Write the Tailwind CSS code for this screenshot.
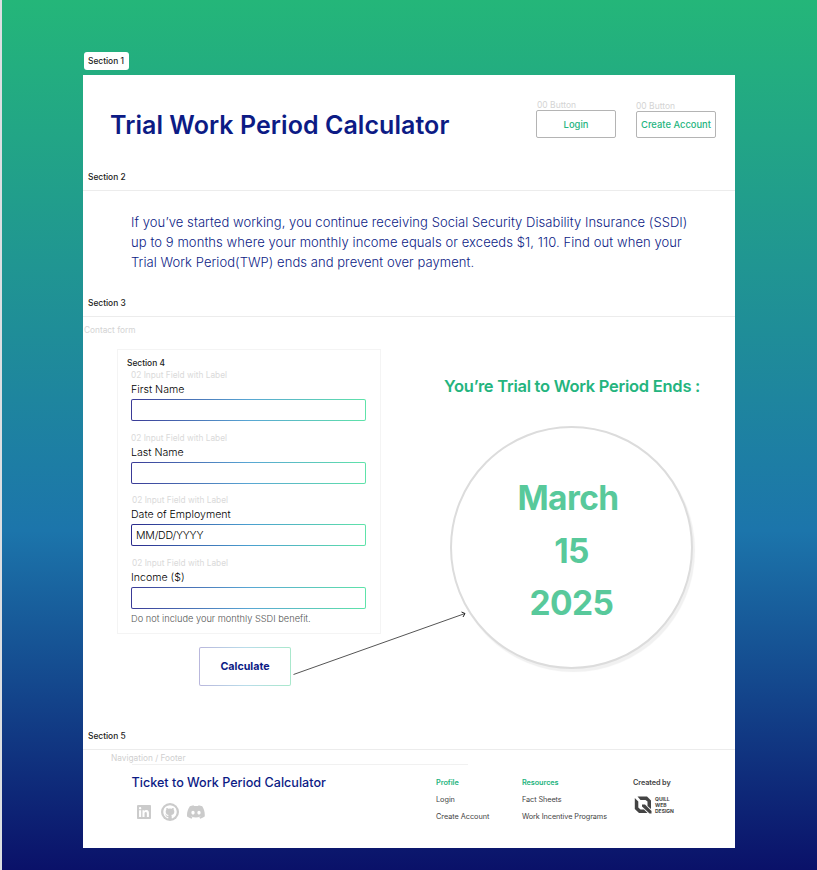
<!DOCTYPE html>
<html lang="en">
<head>
<meta charset="utf-8">
<title>Trial Work Period Calculator</title>
<script src="https://cdn.jsdelivr.net/npm/@tailwindcss/browser@4"></script>
</head>
<body class="w-[817px] h-[870px] overflow-hidden font-['Inter',sans-serif] bg-[linear-gradient(180deg,#24b679_0%,#1c75ab_61%,#0a1169_100%)]">
<div class="relative w-[817px] h-[870px] border-l-2 border-[#dcdfe2] pl-[81px] pt-[52px]">
  <div class="ml-px w-[45px] h-[18px] rounded-[3px] bg-white pl-[4px] text-[8.4px] leading-[18px] font-medium text-[#222] whitespace-nowrap">Section 1</div>
  <main class="mt-[5px] w-[652px] h-[773px] bg-white whitespace-nowrap">
    <header class="h-[116px] border-b border-[#ececec] flex flex-col justify-between">
      <div class="flex pl-[27px]">
        <h1 class="pt-[33px] w-[427px] text-[25px] leading-[34px] font-semibold text-[#0c1b85] tracking-[0.06px]">Trial Work Period Calculator</h1>
        <div class="pt-[24px] w-[99px]">
          <div class="text-[8.5px] leading-[12px] -mb-px text-[#d4d4d4]">00 Button</div>
          <button class="-ml-px block w-[80px] h-[28px] pt-[2px] rounded-[2px] border border-[#b4b4b4] text-[9.4px] font-medium text-[#24b47e]">Login</button>
        </div>
        <div class="pt-[25px]">
          <div class="text-[8.5px] leading-[12px] -mb-px text-[#d4d4d4]">00 Button</div>
          <button class="block w-[80px] h-[27px] pt-[2px] rounded-[2px] border border-[#b4b4b4] text-[9.4px] font-medium text-[#24b47e]">Create Account</button>
        </div>
      </div>
      <div class="pl-[5px] pb-[7px] text-[8.4px] leading-[12px] font-medium text-[#222]">Section 2</div>
    </header>

    <section class="h-[126px] border-b border-[#ececec] flex flex-col justify-between">
      <p class="pl-[48px] pt-[22px] text-[13px] leading-[19.8px] font-light text-[#0c1b85] tracking-[0.055px]">If you’ve started working, you continue receiving Social Security Disability Insurance (SSDI)<br><span class="tracking-[0.085px]">up to 9 months where your monthly income equals or exceeds $1, 110. Find out when your</span><br>Trial Work Period(TWP) ends and prevent over payment.</p>
      <div class="pl-[5px] pb-[7px] text-[8.4px] leading-[12px] font-medium text-[#222]">Section 3</div>
    </section>

    <section class="relative h-[433px] border-b border-[#ececec] flex flex-col justify-between">
      <div class="flex">
        <div class="w-[297px]">
          <div class="pt-[7px] pl-[1px] text-[8.3px] leading-[12px] text-[#d4d4d4]">Contact form</div>
          <form class="mt-[13px] ml-[34px] w-[264px] h-[285px] border border-[#f4f4f4] pl-[13px] pt-[8px]">
            <div class="-ml-[4px] text-[8.4px] leading-[11px] font-medium text-[#222]">Section 4</div>
            <div class="h-[62.5px]">
              <div class="text-[8.3px] leading-[12px] text-[#dadada]">02 Input Field with Label</div>
              <label class="block text-[10.6px] leading-[18px] font-light text-black">First Name</label>
              <div class="w-[235px] h-[22px] p-px rounded-[2px] bg-[linear-gradient(90deg,#3a3a96,#58a6d4_50%,#5fe3a9)]"><div class="h-full rounded-[1px] bg-white"></div></div>
            </div>
            <div class="h-[62.5px]">
              <div class="text-[8.3px] leading-[12px] text-[#dadada]">02 Input Field with Label</div>
              <label class="block text-[10.6px] leading-[17px] mb-px font-light text-black">Last Name</label>
              <div class="w-[235px] h-[22px] p-px rounded-[2px] bg-[linear-gradient(90deg,#3a3a96,#58a6d4_50%,#5fe3a9)]"><div class="h-full rounded-[1px] bg-white"></div></div>
            </div>
            <div class="h-[62.5px]">
              <div class="pl-px text-[8.3px] leading-[12px] text-[#dadada]">02 Input Field with Label</div>
              <label class="block text-[10.6px] leading-[18px] font-light text-black">Date of Employment</label>
              <div class="w-[235px] h-[22px] p-px rounded-[2px] bg-[linear-gradient(90deg,#2a2a8c,#4a9fd0_50%,#5fe3a9)]"><div class="h-full rounded-[1px] bg-white pl-[4px] pt-px text-[10.6px] leading-[20px] font-light text-black tracking-[-0.22px]">MM/DD/YYYY</div></div>
            </div>
            <div>
              <div class="pl-px text-[8.3px] leading-[12px] text-[#dadada]">02 Input Field with Label</div>
              <label class="block text-[10.6px] leading-[17px] mb-px font-light text-black">Income ($)</label>
              <div class="w-[235px] h-[22px] p-px rounded-[2px] bg-[linear-gradient(90deg,#3a3a96,#58a6d4_50%,#5fe3a9)]"><div class="h-full rounded-[1px] bg-white"></div></div>
              <div class="pt-[3px] text-[9.25px] leading-[14px] font-light text-[#555]">Do not include your monthly SSDI benefit.</div>
            </div>
          </form>
          <div class="mt-[13px] ml-[116px] w-[92px] h-[39px] p-px rounded-[2px] bg-[linear-gradient(90deg,#b9b7dc,#b9dcea_50%,#a9e8cc)]"><button class="block w-full h-full pt-[2px] rounded-[1px] bg-white text-[10.7px] font-bold text-[#0c1b85]">Calculate</button></div>
        </div>
        <div class="ml-[64px] pt-[58px]">
          <h2 class="text-[16.5px] leading-[22px] font-semibold text-[#24b47e] tracking-[-0.26px]">You’re Trial to Work Period Ends :</h2>
          <div class="ml-[6px] mt-[29px] w-[243px] h-[243px] rounded-full border-2 border-[#dcdcdc] bg-white shadow-[2px_3px_1px_#f1f1f1] pt-[44px] text-center text-[33.5px] leading-[52.5px] font-bold text-[#58c99b] tracking-[-0.6px]">
            <div class="-ml-[7px]">March</div><div>15</div><div>2025</div>
          </div>
        </div>
      </div>
      <svg class="absolute left-[208px] top-[293px]" width="178" height="68" fill="none" stroke="#555" stroke-width="1"><path d="M2.500 64.500L174 3.500"/><path d="M170.500 2L174 3.500L172 7" stroke="#222"/></svg>
      <div class="pl-[5px] pb-[7px] text-[8.4px] leading-[12px] font-medium text-[#222]">Section 5</div>
    </section>

    <footer>
      <div class="pl-[28px] pt-[2px] text-[8.3px] leading-[12px] text-[#d0d0d0]">Navigation / Footer</div>
      <div class="ml-[49px] w-[336px] h-px bg-[#f1f1f1]"></div>
      <div class="flex pl-[49px] pt-[9px]">
        <div class="w-[304px]">
          <div class="-ml-[0.5px] text-[12.6px] leading-[18px] font-medium text-[#0c1b85]">Ticket to Work Period Calculator</div>
          <div class="mt-[11px] ml-[5px] flex items-center gap-[8px] text-[#cbcbcb]">
            <svg width="14" height="18" viewBox="0 0 24 24" fill="currentColor"><path d="M22.200 0H1.800A1.770 1.770 0 0 0 0 1.730v20.540C0 23.220.8 24 1.770 24h20.450c.98 0 1.780-.78 1.780-1.730V1.730C24 .77 23.200 0 22.200 0zM7.120 20.450H3.560V9h3.560zM5.340 7.430a2.060 2.060 0 1 1 0-4.120 2.060 2.060 0 0 1 0 4.120zM20.450 20.450h-3.560v-5.570c0-1.330-.02-3.040-1.850-3.040-1.850 0-2.140 1.450-2.140 2.940v5.670H9.350V9h3.410v1.560h.05c.48-.9 1.640-1.850 3.370-1.850 3.600 0 4.270 2.370 4.270 5.460z"/></svg>
            <svg class="ml-[1.5px]" width="18" height="18" viewBox="0 0 24 24"><circle cx="12" cy="12" r="12" fill="currentColor"/><path fill="#fff" d="M12 3a9 9 0 0 0-2.850 17.540c.45.080.6-.2.600-.43v-1.700c-2.500.54-3.030-1.060-3.030-1.060-.4-1.040-1-1.320-1-1.320-.82-.56.060-.55.060-.55.900.06 1.380.93 1.380.93.800 1.370 2.100.98 2.620.75.080-.58.310-.98.570-1.200-2-.23-4.100-1-4.100-4.450 0-.98.350-1.790.930-2.420-.1-.22-.4-1.140.080-2.380 0 0 .76-.24 2.480.93a8.600 8.600 0 0 1 4.520 0c1.720-1.170 2.470-.93 2.470-.93.500 1.240.190 2.160.1 2.380.57.630.92 1.440.92 2.420 0 3.460-2.110 4.220-4.120 4.440.33.280.62.830.62 1.670v2.490c0 .24.150.52.610.43A9 9 0 0 0 12 3z"/></svg>
            <svg width="18" height="18" viewBox="0 0 24 24" fill="currentColor"><path d="M20.320 4.370a19.800 19.800 0 0 0-4.890-1.520c-.2.380-.45.870-.61 1.260a18.300 18.300 0 0 0-5.490 0 12.600 12.600 0 0 0-.62-1.260 19.700 19.700 0 0 0-4.890 1.520C.530 9.050-.320 13.580.1 18.060a19.900 19.900 0 0 0 6 3.030c.46-.63.870-1.300 1.220-2a13 13 0 0 1-1.870-.9l.37-.3a14.200 14.200 0 0 0 12.060 0l.37.300c-.6.350-1.220.64-1.870.9.360.7.770 1.360 1.230 2a19.800 19.800 0 0 0 6-3.030c.5-5.180-.84-9.670-3.290-13.690zM8.020 15.330c-1.180 0-2.160-1.080-2.160-2.420s.96-2.420 2.160-2.420 2.180 1.100 2.160 2.420c0 1.340-.96 2.420-2.160 2.420zm7.970 0c-1.180 0-2.150-1.080-2.150-2.420s.95-2.420 2.150-2.420c1.220 0 2.180 1.100 2.160 2.420 0 1.340-.94 2.420-2.160 2.420z"/></svg>
          </div>
        </div>
        <div class="w-[86px] text-[7.3px] leading-[17px] text-[#444] tracking-[-0.03px]"><div class="font-semibold text-[#24b47e]">Profile</div><div>Login</div><div>Create Account</div></div>
        <div class="w-[111px] text-[7.3px] leading-[17px] text-[#444] tracking-[-0.08px]"><div class="font-semibold text-[#24b47e]">Resources</div><div>Fact Sheets</div><div>Work Incentive Programs</div></div>
        <div>
          <div class="text-[7.3px] leading-[17px] font-semibold text-[#444] tracking-[-0.1px]">Created by</div>
          <div class="flex items-center gap-[3px] mt-[5px] pl-px">
            <svg width="18" height="18" viewBox="0 0 18 18" fill="#444"><path d="M3.500.5H13L17 4.500V13L13.500 10V5.500L11.500 4H6.500Z"/><path d="M.8 2L4.300 5.500V11.500L6.500 13.500H10L13.500 17H5L.8 13Z"/><path d="M8 8.500H11L17.500 15V17.500H15.500L8 10.500Z"/></svg>
            <div class="text-[5px] leading-[6px] font-bold text-[#444]">QUILL<br>WEB<br>DESIGN</div>
          </div>
        </div>
      </div>
    </footer>
  </main>
</div>
</body>
</html>
